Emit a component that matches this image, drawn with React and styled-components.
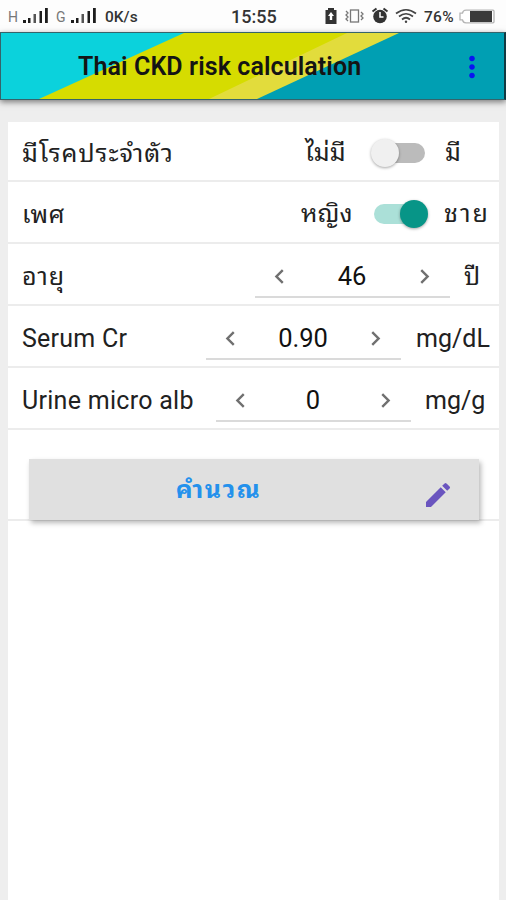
import styled, { createGlobalStyle } from "styled-components";
import {
	MdChevronLeft,
	MdChevronRight,
	MdEdit,
	MdMoreVert,
} from "react-icons/md";

const fontStack =
	'Roboto, "Noto Sans Thai Looped", "Noto Looped Thai", Loma, Garuda, Waree, "Noto Sans", sans-serif';

const GlobalStyle = createGlobalStyle`
	* {
		box-sizing: border-box;
	}
	body {
		margin: 0;
		background-color: #eeeeee;
		font-family: ${fontStack};
	}
`;

const Screen = styled.div`
	width: 506px;
	height: 900px;
	overflow: hidden;
	display: flex;
	flex-direction: column;
	background-color: #eeeeee;
`;

const StatusBar = styled.div`
	height: 32px;
	flex-shrink: 0;
	display: flex;
	align-items: center;
	background-color: #fdfdfd;
	color: #333;
`;

const StatusText = styled.span`
	font-size: ${(props) => props.size}px;
	font-weight: ${(props) => props.weight || 500};
	margin-left: ${(props) => props.gap}px;
	width: ${(props) => props.width}px;
	color: ${(props) => props.color || "#333"};
	letter-spacing: ${(props) => props.spacing || 0}px;
	white-space: nowrap;
	line-height: 20px;
	padding-top: 2px;
`;

const StatusIcon = styled.svg`
	display: block;
	flex-shrink: 0;
	margin-left: ${(props) => props.gap}px;
`;

const AppBar = styled.header`
	position: relative;
	height: 68px;
	flex-shrink: 0;
	display: flex;
	align-items: center;
	padding: 0 22px 0 77px;
	border: 1px solid #35646b;
	border-right: 2px solid #123a42;
	box-shadow: 0 2px 6px rgba(0, 0, 0, 0.5);
`;

const Artwork = styled.svg`
	position: absolute;
	top: 0;
	left: 0;
	width: 100%;
	height: 100%;
`;

const Title = styled.h1`
	position: relative;
	flex: 1;
	margin: 2px 0 0;
	font-size: 25px;
	font-weight: 600;
	line-height: 30px;
	letter-spacing: 0.1px;
	color: #141414;
	white-space: nowrap;
`;

const MenuButton = styled.button`
	position: relative;
	display: flex;
	justify-content: center;
	width: 20px;
	margin-top: 2px;
	padding: 0;
	border: 0;
	background: none;
	color: #0a14f0;
`;

const Card = styled.main`
	flex: 1;
	margin: 22px 7px 0 8px;
	background-color: #fff;
`;

const Row = styled.div`
	height: ${(props) => props.height || 62}px;
	display: flex;
	align-items: center;
	padding: 3px 0 0 14px;
	border-bottom: 2px solid #ececec;
	color: #212121;
	font-size: 25px;
`;

const Label = styled.span`
	flex: 1;
	padding-top: 2px;
	white-space: nowrap;
	font-size: 25px;
	line-height: 34px;
	letter-spacing: ${(props) => props.spacing || 0}px;
`;

const Option = styled.span`
	width: ${(props) => props.width}px;
	margin-right: ${(props) => props.gap}px;
	font-size: 25px;
	line-height: 34px;
	letter-spacing: ${(props) => props.spacing || 0}px;
	white-space: nowrap;
`;

const Track = styled.span`
	display: flex;
	align-items: center;
	justify-content: ${(props) => (props.on ? "flex-end" : "flex-start")};
	width: 50px;
	height: 20px;
	border-radius: 10px;
	margin-right: ${(props) => props.gap}px;
	background-color: ${(props) => (props.on ? "#abe0d8" : "#bbbbbb")};
`;

const Thumb = styled.span`
	flex-shrink: 0;
	width: 28px;
	height: 28px;
	border-radius: 50%;
	margin: ${(props) => (props.on ? "0 -4px 0 0" : "0 0 0 -4px")};
	background-color: ${(props) => (props.on ? "#079587" : "#f0f0f0")};
	box-shadow: 0 1px 3px rgba(0, 0, 0, 0.35);
`;

const Stepper = styled.div`
	display: flex;
	align-items: center;
	justify-content: space-between;
	width: 195px;
	height: 45px;
	margin-right: ${(props) => props.gap}px;
	padding: 3px 11px 0 10px;
	border-bottom: 2px solid #dadada;
	color: #707070;
`;

const Value = styled.span`
	font-size: 25.5px;
	line-height: 34px;
	color: #111;
`;

const Unit = styled.span`
	width: ${(props) => props.width}px;
	padding-top: 2px;
	font-size: 25px;
	line-height: 34px;
	white-space: nowrap;
`;

const ButtonRow = styled.div`
	height: 91px;
	padding: 29px 20px 0 21px;
	border-bottom: 2px solid #ececec;
`;

const CalculateButton = styled.button`
	display: flex;
	align-items: center;
	width: 100%;
	height: 61px;
	padding: 0 25px 0 0;
	border: 0;
	background-color: #e0e0e0;
	box-shadow: 2px 3px 5px rgba(0, 0, 0, 0.28);
	color: #6a55bf;
	position: relative;
`;

const ButtonText = styled.span`
	flex: 1;
	padding: 1px 14px 0 0;
	font-family: ${fontStack};
	font-size: 25px;
	font-weight: 700;
	line-height: 34px;
	letter-spacing: 1.5px;
	color: #2491ec;
	text-align: center;
`;

const EditIcon = styled(MdEdit)`
	margin-top: 10px;
`;

const Signal = () => (
	<StatusIcon gap={0} width="27" height="16" viewBox="0 0 27 16" fill="#1d1d1d">
		<rect x="1" y="12" width="3" height="3" />
		<rect x="6" y="10" width="2.5" height="5" />
		<rect x="11.5" y="6" width="2.5" height="9" fill="#555" />
		<rect x="17.5" y="3" width="2.5" height="12" />
		<rect x="23" y="0" width="2.8" height="15" />
	</StatusIcon>
);

const Status = () => (
	<StatusBar>
		<StatusText size={14} weight={400} gap={8} width={14} color="#777">
			H
		</StatusText>
		<Signal />
		<StatusText size={14} weight={400} gap={7} width={14} color="#777">
			G
		</StatusText>
		<Signal />
		<StatusText size={15.5} gap={8} width={126}>
			0K/s
		</StatusText>
		<StatusText size={18} gap={0} width={94}>
			15:55
		</StatusText>
		<StatusIcon gap={0} width="12" height="16" viewBox="0 0 12 16">
			<path d="M3 0h6v2h2.5v14H.5V2H3z" fill="#333" />
			<path d="M6 4l3 4H7.2v4H4.8V8H3z" fill="#fff" />
		</StatusIcon>
		<StatusIcon
			gap={8}
			width="20"
			height="16"
			viewBox="0 0 20 16"
			fill="none"
			stroke="#777"
			strokeWidth="1.3"
		>
			<rect x="5.5" y="2" width="8" height="12" />
			<path d="M1 3l2 2-2 2 2 2-2 2 2 2M16 4l2 2-2 2 2 2-2 2" />
		</StatusIcon>
		<StatusIcon gap={6} width="18" height="18" viewBox="0 0 18 18">
			<circle cx="9" cy="9.5" r="6.8" fill="#333" />
			<path d="M1.5 4.5l4-3M16.5 4.5l-4-3" stroke="#333" strokeWidth="2" />
			<path d="M9 5v5h3.5" stroke="#fff" strokeWidth="1.5" fill="none" />
		</StatusIcon>
		<StatusIcon
			gap={6}
			width="22"
			height="16"
			viewBox="0 0 22 16"
			fill="none"
			stroke="#444"
			strokeWidth="1.7"
		>
			<path d="M1 5.5Q11-2 21 5.5M4 8.5Q11 3 18 8.5M7 11.5Q11 8 15 11.5" />
			<circle cx="11" cy="13.7" r="1.2" fill="#444" stroke="none" />
		</StatusIcon>
		<StatusText size={15.5} gap={7} width={33} spacing={0.3}>
			76%
		</StatusText>
		<StatusIcon gap={2} width="36" height="15" viewBox="0 0 36 15">
			<path
				d="M7 1.2h27q1 0 1 1v10.6q0 1-1 1H7q-3 0-3.5-3H1V4.2h2.5q.5-3 3.5-3z"
				fill="#fff"
				stroke="#b5b5b5"
				strokeWidth="1.3"
			/>
			<rect x="11" y="2" width="22" height="11" fill="#3a3a3a" />
		</StatusIcon>
	</StatusBar>
);

const Toggle = ({ on, gap }) => (
	<Track on={on} gap={gap}>
		<Thumb on={on} />
	</Track>
);

const NumberRow = ({ label, value, unit, unitWidth, gap, spacing }) => (
	<Row>
		<Label spacing={spacing}>{label}</Label>
		<Stepper gap={gap}>
			<MdChevronLeft size={29} />
			<Value>{value}</Value>
			<MdChevronRight size={29} />
		</Stepper>
		<Unit width={unitWidth}>{unit}</Unit>
	</Row>
);

const App = () => {
	return (
		<Screen>
			<GlobalStyle />
			<Status />
			<AppBar>
				<Artwork viewBox="0 0 503 66" preserveAspectRatio="none">
					<rect width="503" height="66" fill="#009fb3" />
					<path d="M0 0H398L256 66H0z" fill="#e2dc3c" />
					<path d="M0 0H346L208 66H0z" fill="#d6dc00" />
					<path d="M0 0H183L38 66H0z" fill="#0bd2dc" />
				</Artwork>
				<Title>Thai CKD risk calculation</Title>
				<MenuButton>
					<MdMoreVert size={34} style={{ flexShrink: 0 }} />
				</MenuButton>
			</AppBar>
			<Card>
				<Row height={60}>
					<Label spacing={1}>มีโรคประจำตัว</Label>
					<Option width={43} gap={27}>
						ไม่มี
					</Option>
					<Toggle gap={20} />
					<Option width={54}>มี</Option>
				</Row>
				<Row>
					<Label spacing={0.5}>เพศ</Label>
					<Option width={50} gap={23}>
						หญิง
					</Option>
					<Toggle on gap={20} />
					<Option width={55} spacing={2}>
						ชาย
					</Option>
				</Row>
				<NumberRow
					label="อายุ"
					value="46"
					unit="ปี"
					gap={14}
					unitWidth={35}
					spacing={1}
				/>
				<NumberRow
					label="Serum Cr"
					value="0.90"
					unit="mg/dL"
					gap={15}
					unitWidth={83}
					spacing={0.25}
				/>
				<NumberRow
					label="Urine micro alb"
					value="0"
					unit="mg/g"
					gap={14}
					unitWidth={74}
					spacing={0.28}
				/>
				<ButtonRow>
					<CalculateButton>
						<ButtonText>คำนวณ</ButtonText>
						<EditIcon size={32} />
					</CalculateButton>
				</ButtonRow>
			</Card>
		</Screen>
	);
};

export default App;
